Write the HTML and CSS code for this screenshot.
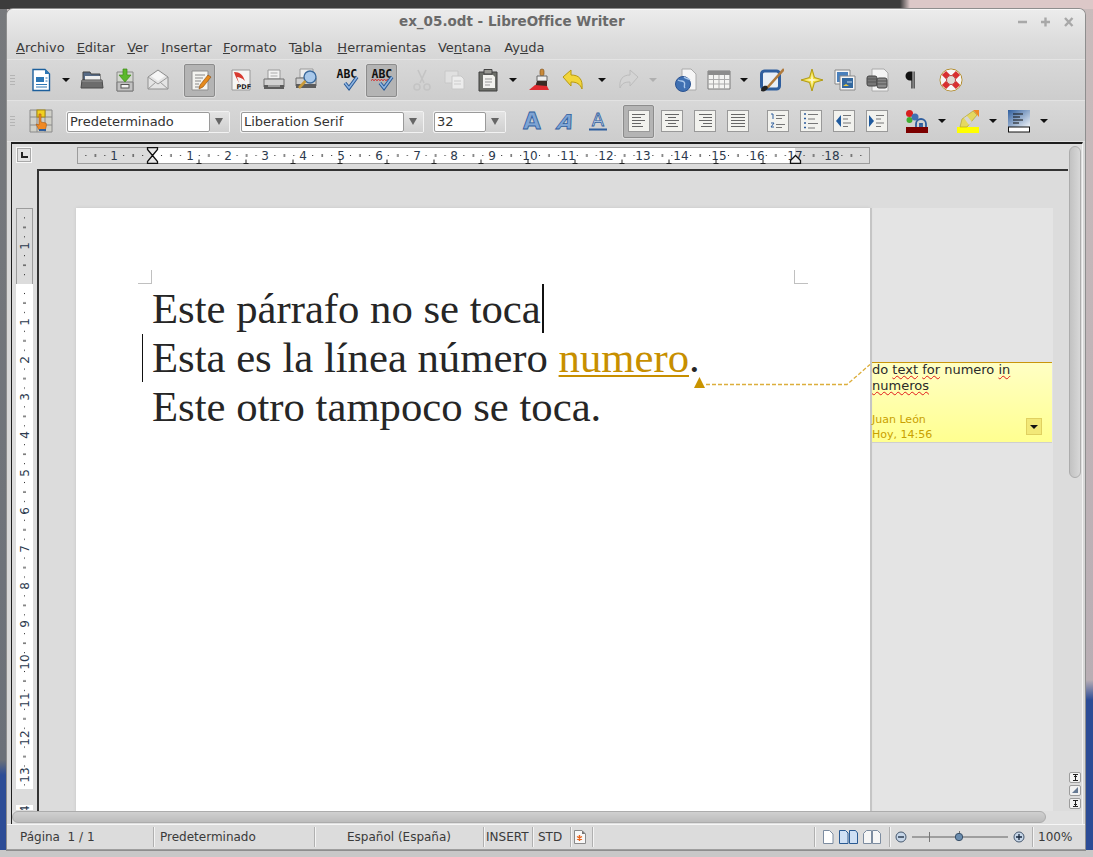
FILE: index.html
```html
<!DOCTYPE html>
<html lang="es">
<head>
    <meta charset="UTF-8">
    <title>ex_05.odt - LibreOffice Writer</title>
    <link rel="stylesheet" href="styles.css">
</head>
<body>
<div class="desktop">
<div class="window">

    <div class="titlebar">
        <span class="title">ex_05.odt - LibreOffice Writer</span>
        <div class="wm-buttons">
            <svg width="70" height="14" viewBox="0 0 70 14"><g stroke="#a8a8a8" stroke-width="2.4" fill="none"><path d="M3 7h9"/><path d="M26 7h9M30.500 2.500v9"/><path d="M50 3l7.500 8M57.500 3l-7.500 8"/></g></svg>
        </div>
    </div>

    <div class="menubar">
        <span><u>A</u>rchivo</span>
        <span><u>E</u>ditar</span>
        <span><u>V</u>er</span>
        <span><u>I</u>nsertar</span>
        <span><u>F</u>ormato</span>
        <span>T<u>a</u>bla</span>
        <span><u>H</u>erramientas</span>
        <span>Ve<u>n</u>tana</span>
        <span>Ay<u>u</u>da</span>
    </div>

    <!-- standard toolbar -->
    <div class="toolbar">
        <span class="grip"></span>
        <div class="tool"><svg viewBox="0 0 24 24"><path d="M4 1.500h12l4.500 4.500v16.500H4z" fill="#fff" stroke="#1c5f9c" stroke-width="1.400"/><path d="M16 1l5 5h-5z" fill="#2d76b4"/><rect x="7" y="9" width="8" height="5" fill="#2d76b4"/><path d="M16.500 10h2M16.500 13h2M7 16.500h11M7 19h11" stroke="#2d76b4"/></svg></div>
        <div class="drop"></div>
        <div class="tool"><svg viewBox="0 0 24 24"><path d="M3 4h7l1 2h9v6H3z" fill="#566a86" stroke="#444"/><path d="M5 8h15v4H5z" fill="#eee"/><path d="M2 12h20l1 8H1z" fill="#6c6c6c" stroke="#4a4a4a"/><path d="M2 13h20" stroke="#999"/></svg></div>
        <div class="tool"><svg viewBox="0 0 24 24"><path d="M4 4h16v19H4z" fill="#d4d8d0" stroke="#8a8a8a"/><path d="M4 14h16v9H4z" fill="#c2c2c2" stroke="#777"/><rect x="8" y="16.500" width="8" height="3.500" fill="#f2f2f2" stroke="#555"/><path d="M10 1h4v6h4l-6 7-6-7h4z" fill="#5cb82c" stroke="#3c8a18" stroke-width=".7"/></svg></div>
        <div class="tool"><svg viewBox="0 0 24 24"><path d="M2 9l10-7 10 7v12H2z" fill="#e4e4e4" stroke="#8e8e8e"/><path d="M2 9l10 7 10-7M2 21l8-7M22 21l-8-7" fill="none" stroke="#9a9a9a"/><path d="M5 8l7-5 7 5-7 5z" fill="#f6f6f6"/></svg></div>
        <div class="tool on gap9"><svg viewBox="0 0 24 24"><path d="M4 3h16v19H4z" fill="#f4f4f0" stroke="#8f8f8f"/><path d="M7 7h10M7 10h8M7 13h6M7 16h4M7 19h7" stroke="#888"/><path d="M20 7l3 2-8 10-4 2 1-4z" fill="#e68a1c" stroke="#8a4a0a" stroke-width=".6"/></svg></div>
        <div class="tool gap8"><svg viewBox="0 0 24 24"><path d="M3 2h18v20H3z" fill="#f6f6f4" stroke="#9a9a9a"/><path d="M5 4c6 0 9 3 11 9-3-3-6-4-8-4l2 6C8 11 6 8 5 4z" fill="#d83a30"/><text x="7.500" y="20.500" class="pdf">PDF</text></svg></div>
        <div class="tool"><svg viewBox="0 0 24 24"><path d="M6 2h12v9H6z" fill="#f2f2f2" stroke="#9a9a9a"/><path d="M8.500 5h7M8.500 8h7" stroke="#aaa"/><path d="M2 11h20v8H2z" fill="#d2d2d2" stroke="#6e6e6e"/><path d="M2 17h20v4H2z" fill="#5c5c5c"/><path d="M6 18h12" stroke="#ddd"/></svg></div>
        <div class="tool"><svg viewBox="0 0 24 24"><path d="M5 1h13v9H5z" fill="#eee" stroke="#9a9a9a"/><path d="M1 10h20v8H1z" fill="#cfcfcf" stroke="#6e6e6e"/><path d="M1 16h20v4H1z" fill="#5c5c5c"/><circle cx="15" cy="9" r="6" fill="#a8c8ea" stroke="#3c6a9c" stroke-width="1.400"/><path d="M10.500 13L4 20" stroke="#c89a3a" stroke-width="2.600"/></svg></div>
        <div class="tool gap7"><svg viewBox="0 0 24 24"><text x="1.500" y="10" class="abc">ABC</text><path d="M10 15l4 5 8-11" fill="none" stroke="#2a5a96" stroke-width="3.600"/><path d="M10 15l4 5 8-11" fill="none" stroke="#8db4e2" stroke-width="1.600"/></svg></div>
        <div class="tool on gap2"><svg viewBox="0 0 24 24"><text x="1.500" y="10" class="abc">ABC</text><path d="M1 12.500l1.500-1 1.500 1 1.500-1 1.500 1 1.500-1 1.500 1 1.500-1 1.500 1 1.500-1 1.500 1 1.500-1 1.500 1" fill="none" stroke="#d82020"/><path d="M10 15l4 5 8-11" fill="none" stroke="#2a5a96" stroke-width="3.600"/><path d="M10 15l4 5 8-11" fill="none" stroke="#8db4e2" stroke-width="1.600"/></svg></div>
        <div class="tool gap7"><svg viewBox="0 0 24 24"><g fill="none" stroke="#c4c4c4" stroke-width="1.600"><path d="M8 2l6 13M16 2l-6 13"/><circle cx="7" cy="19" r="3"/><circle cx="17" cy="19" r="3"/></g></svg></div>
        <div class="tool"><svg viewBox="0 0 24 24"><g fill="#e0e0e0" stroke="#c8c8c8"><path d="M2 3h13v12H2z"/><path d="M9 8h9l3 3v10H9z" fill="#ececec"/></g><path d="M11 13h7M11 16h7" stroke="#ccc"/></svg></div>
        <div class="tool"><svg viewBox="0 0 24 24"><path d="M3 4h18v19H3z" fill="#6c6e68" stroke="#3e3e3e"/><path d="M8 1.500h8V6H8z" fill="#9a9a94" stroke="#444"/><path d="M7 7h10l2 2v11H7z" fill="#f2f2ee"/><path d="M9 11h7M9 14h7M9 17h5" stroke="#999"/></svg></div>
        <div class="drop"></div>
        <div class="tool gap2"><svg viewBox="0 0 24 24"><rect x="11" y="1" width="4" height="7" rx="2" fill="#c98a3a" stroke="#7a4c14" stroke-width=".6"/><path d="M8 8h10v5H8z" fill="#eee" stroke="#666"/><path d="M8 13h10v6H6z" fill="#3a2a24"/><path d="M0 22l6-5 12 1 2 4z" fill="#e02a30"/></svg></div>
        <div class="tool"><svg viewBox="0 0 24 24"><path d="M1 9l8-7v5c8 0 12 4 11 14-2-5-5-7-11-7v4z" fill="#f2d63c" stroke="#b89a10"/></svg></div>
        <div class="drop gap2"></div>
        <div class="tool"><svg viewBox="0 0 24 24"><path d="M22 9l-8-7v5C7 7 3 11 4 20c2-5 5-6 10-6v4z" fill="#d4d4d4" stroke="#bcbcbc"/></svg></div>
        <div class="drop off"></div>
        <div class="tool gap7"><svg viewBox="0 0 24 24"><path d="M8 1h9l5 5v16H8z" fill="#f6f6f6" stroke="#aaa"/><circle cx="9" cy="16" r="7.500" fill="#3f70b2" stroke="#2a5290"/><path d="M4 12c3 2 4 0 6 2s-1 4 1 6M10 9c2 2 4 1 6 3" fill="none" stroke="#a8c6ea" stroke-width="1.400"/></svg></div>
        <div class="tool"><svg viewBox="0 0 24 24"><path d="M1 3h22v18H1z" fill="#f4f4f2" stroke="#7a7a7a"/><path d="M1 3h22v4H1z" fill="#8c8c8c"/><path d="M1 11.500h22M1 16h22M6.500 7v14M12 7v14M17.500 7v14" stroke="#aaa"/></svg></div>
        <div class="drop"></div>
        <div class="tool gap2"><svg viewBox="0 0 24 24"><rect x="1.500" y="3" width="18" height="18" rx="3" fill="#e8eef6" stroke="#2f5e9e" stroke-width="3"/><path d="M7 20L24 1" stroke="#b07a3c" stroke-width="2.600"/><path d="M1 23c0-4 3-6 6-5l1 2c-2 3-4 4-7 3z" fill="#222"/></svg></div>
        <div class="tool gap7"><svg viewBox="0 0 24 24"><path d="M12 1l2.500 8.500L23 12l-8.500 2.500L12 23l-2.500-8.500L1 12l8.500-2.500z" fill="#f0dc3c" stroke="#b09a14"/><path d="M12 5l1 6 6 1-6 1-1 6-1-6-6-1 6-1z" fill="#fdf8c8"/></svg></div>
        <div class="tool"><svg viewBox="0 0 24 24"><path d="M2 2h15v14H2z" fill="#f6f6f6" stroke="#888"/><rect x="4" y="4" width="11" height="10" fill="#4a80bc"/><path d="M7 8h15v14H7z" fill="#f6f6f6" stroke="#888"/><rect x="9" y="10" width="11" height="10" fill="#33689e"/><path d="M10 18l3-2 3 2h-6z" fill="#e8c83c"/><path d="M14 14h5" stroke="#cde"/></svg></div>
        <div class="tool"><svg viewBox="0 0 24 24"><path d="M6 1h12l4 4v18H6z" fill="#f4f4f4" stroke="#aaa"/><rect x="1" y="8" width="10" height="10" rx="2" fill="#777" stroke="#444"/><rect x="11" y="10" width="10" height="10" rx="2" fill="#8a8a8a" stroke="#444"/><path d="M1 11h10M1 14h10M11 13h10M11 16h10" stroke="#555"/></svg></div>
        <div class="tool"><svg viewBox="0 0 24 24"><path d="M13.500 3.500H11a4.500 4.500 0 0 0 0 9h1.400v8h1.100z" fill="#111"/><path d="M14.600 3.500h1v17h-1z" fill="#111"/></svg></div>
        <div class="tool gap7"><svg viewBox="0 0 24 24"><circle cx="12" cy="12" r="11" fill="#e8d8a8" stroke="#b08a2c"/><circle cx="12" cy="12" r="7.500" fill="none" stroke="#f6f6f6" stroke-width="6"/><path d="M5 5l4 4M19 5l-4 4M5 19l4-4M19 19l-4-4" stroke="#d83030" stroke-width="6"/><circle cx="12" cy="12" r="4.500" fill="#e0dcd4" stroke="#c04040"/></svg></div>
    </div>

    <!-- formatting toolbar -->
    <div class="toolbar">
        <span class="grip"></span>
        <div class="tool"><svg viewBox="0 0 24 24"><path d="M1 1h22v22H1z" fill="#d0d0c8" stroke="#8a8a8a"/><path d="M8 1v22M16 1v22M1 8h22M1 16h22" stroke="#8a8a8a"/><rect x="8" y="1" width="8" height="7" fill="#f2d020" stroke="#a88c10"/><path d="M10 5h2v8l5 1c1 2 0 5-1 7H10l-3-6 3 1z" fill="#f08a24" stroke="#a85a10" stroke-width=".6"/><rect x="10" y="20" width="7" height="2" fill="#2f5e9e"/></svg></div>
        <div class="combo style-box"><span class="combo-text">Predeterminado</span><span class="combo-arrow"></span></div>
        <div class="combo font-box"><span class="combo-text">Liberation Serif</span><span class="combo-arrow"></span></div>
        <div class="combo size-box"><span class="combo-text">32</span><span class="combo-arrow"></span></div>
        <div class="tool gap9"><svg viewBox="0 0 24 24"><text x="12" y="20" class="fa">A</text></svg></div>
        <div class="tool"><svg viewBox="0 0 24 24"><text transform="translate(10 20) skewX(-22)" class="fa fa-i">A</text></svg></div>
        <div class="tool"><svg viewBox="0 0 24 24"><text x="12" y="17" class="fa fa-u">A</text><path d="M3 20.500h18" stroke="#2f5e9e" stroke-width="2"/></svg></div>
        <div class="tool on gap8"><svg viewBox="0 0 24 24"><rect x="1.500" y="1.500" width="21" height="21" fill="#f2f2ee" stroke="#999"/><path d="M5 5.500h13M5 8.500h9M5 11.500h13M5 14.500h9M5 17.500h11" stroke="#666"/></svg></div>
        <div class="tool"><svg viewBox="0 0 24 24"><rect x="1.500" y="1.500" width="21" height="21" fill="#f2f2ee" stroke="#999"/><path d="M5 5.500h14M8 8.500h8M5 11.500h14M8 14.500h8M6 17.500h12" stroke="#666"/></svg></div>
        <div class="tool"><svg viewBox="0 0 24 24"><rect x="1.500" y="1.500" width="21" height="21" fill="#f2f2ee" stroke="#999"/><path d="M6 5.500h13M10 8.500h9M6 11.500h13M10 14.500h9M8 17.500h11" stroke="#666"/></svg></div>
        <div class="tool"><svg viewBox="0 0 24 24"><rect x="1.500" y="1.500" width="21" height="21" fill="#f2f2ee" stroke="#999"/><path d="M5 5.500h14M5 8.500h14M5 11.500h14M5 14.500h14M5 17.500h14" stroke="#666"/></svg></div>
        <div class="tool gap7"><svg viewBox="0 0 24 24"><rect x="1.500" y="1.500" width="21" height="21" fill="#f2f2ee" stroke="#999"/><path d="M5 5h2v5M5 14h3l-3 4h3" fill="none" stroke="#2f5e9e"/><path d="M10 6.500h9M10 9.500h6M10 15.500h9M10 18.500h6" stroke="#777"/></svg></div>
        <div class="tool"><svg viewBox="0 0 24 24"><rect x="1.500" y="1.500" width="21" height="21" fill="#f2f2ee" stroke="#999"/><path d="M5 5h2M5 9.500h2M5 14h2M5 18.500h2" stroke="#2f5e9e" stroke-width="1.500"/><path d="M9 5.500h10M9 10h7M9 14.500h10M9 19h7" stroke="#777"/></svg></div>
        <div class="tool"><svg viewBox="0 0 24 24"><rect x="1.500" y="1.500" width="21" height="21" fill="#f2f2ee" stroke="#999"/><path d="M9 6v12L4 12z" fill="#1f5a9e"/><path d="M11 6.500h8M11 10h5M11 14h8M11 17.500h5" stroke="#777"/></svg></div>
        <div class="tool"><svg viewBox="0 0 24 24"><rect x="1.500" y="1.500" width="21" height="21" fill="#f2f2ee" stroke="#999"/><path d="M4 6v12l5-6z" fill="#1f5a9e"/><path d="M11 6.500h8M11 10h5M11 14h8M11 17.500h5" stroke="#777"/></svg></div>
        <div class="tool gap7"><svg viewBox="0 0 24 24"><rect x="1" y="18" width="22" height="6" fill="#7c0000"/><circle cx="4.500" cy="4.500" r="3.500" fill="#d82020"/><circle cx="4.500" cy="11" r="3" fill="#40b030"/><circle cx="10" cy="8" r="3.500" fill="#3f70b2"/><path d="M11 18v-3a5 5 0 0 1 10 0v3M15 18v-3h2v3" fill="none" stroke="#2f5e9e" stroke-width="1.800"/></svg></div>
        <div class="drop"></div>
        <div class="tool"><svg viewBox="0 0 24 24"><rect x="1" y="18" width="22" height="6" fill="#ffff00"/><path d="M4 18l2-8L17 2l4 4-10 12z" fill="#e4d860" stroke="#b0a020" stroke-width=".6"/><path d="M8 9l3-2 5 6-3 3z" fill="#d6d6d6"/><path d="M17 1h6v7z" fill="#f08a24"/></svg></div>
        <div class="drop"></div>
        <div class="tool"><svg viewBox="0 0 24 24"><defs><linearGradient id="bgfill" x1="0" y1="0" x2="1" y2="1"><stop offset="0" stop-color="#2f5e9e"/><stop offset="1" stop-color="#f0f4f8"/></linearGradient></defs><rect x="1" y="1" width="22" height="17" fill="url(#bgfill)"/><path d="M6 5h10M6 8h7M6 11h10M6 14h6" stroke="#111"/><rect x="1.500" y="18" width="21" height="5" fill="#fff" stroke="#111"/></svg></div>
        <div class="drop"></div>
    </div>

    <div class="editor">
        <div class="edit-left">
            <div class="ruler-row">
                <div class="ruler-corner"><span class="tab-mark"></span></div>
                <svg class="h-ruler" width="793" height="17" viewBox="0 0 793 17">
                    <defs>
                        <pattern id="hticks" x="75" y="0" width="37.800" height="17" patternUnits="userSpaceOnUse">
                            <rect x="9" y="8" width="1" height="1" fill="#222"/>
                            <rect x="18.500" y="7" width="1" height="3" fill="#222"/>
                            <rect x="28" y="8" width="1" height="1" fill="#222"/>
                        </pattern>
                    </defs>
                    <rect x=".5" y=".5" width="792" height="16" fill="#dcdcdc" stroke="#9c9c9c"/>
                    <rect x="75" y="1" width="643" height="15" fill="#fff"/>
                    <rect x="0" y="1" width="793" height="15" fill="url(#hticks)"/>
                    <g class="rnum">
                        <text x="37">1</text><text x="113">1</text><text x="151">2</text><text x="188">3</text><text x="226">4</text><text x="264">5</text><text x="302">6</text><text x="340">7</text><text x="377">8</text><text x="415">9</text><text x="453">10</text><text x="491">11</text><text x="529">12</text><text x="566">13</text><text x="604">14</text><text x="642">15</text><text x="680">16</text><text x="718">17</text><text x="755">18</text>
                    </g>
                    <g stroke="#222" fill="none"><path d="M122 12.500v4M119.500 16.500h5M169 12.500v4M166.500 16.500h5M216 12.500v4M213.500 16.500h5M263 12.500v4M260.500 16.500h5M310 12.500v4M307.500 16.500h5M357 12.500v4M354.500 16.500h5M404 12.500v4M401.500 16.500h5M451 12.500v4M448.500 16.500h5M498 12.500v4M495.500 16.500h5M545 12.500v4M542.500 16.500h5M592 12.500v4M589.500 16.500h5M639 12.500v4M636.500 16.500h5M686 12.500v4M683.500 16.500h5"/></g>
                    <path d="M70.500 .5h10v2l-5 6 5 6v2h-10v-2l5-6-5-6z" fill="#e8e8e8" stroke="#111" stroke-width="1.300"/>
                    <path d="M713.500 16.500v-3l5-5 5 5v3z" fill="#f0f0f0" stroke="#111" stroke-width="1.300"/>
                </svg>
            </div>
            <div class="work">
                <div class="v-col">
                    <svg class="v-ruler" width="17" height="602" viewBox="0 0 17 602">
                        <defs>
                            <pattern id="vticks" x="0" y="76" width="17" height="37.800" patternUnits="userSpaceOnUse">
                                <rect x="8" y="9" width="1" height="1" fill="#222"/>
                                <rect x="7" y="18.500" width="3" height="1" fill="#222"/>
                                <rect x="8" y="28" width="1" height="1" fill="#222"/>
                            </pattern>
                        </defs>
                        <rect x=".5" y=".5" width="16" height="76" fill="#dcdcdc" stroke="#9c9c9c"/>
                        <rect x="0" y="76" width="17" height="505" fill="#fff"/>
                        <rect x="0" y="597" width="17" height="5" fill="#fff"/>
                        <rect x="0" y="1" width="17" height="580" fill="url(#vticks)"/>
                        <g class="rnum">
                            <text transform="translate(13 38) rotate(-90)">1</text><text transform="translate(13 114) rotate(-90)">1</text><text transform="translate(13 152) rotate(-90)">2</text><text transform="translate(13 189) rotate(-90)">3</text><text transform="translate(13 227) rotate(-90)">4</text><text transform="translate(13 265) rotate(-90)">5</text><text transform="translate(13 303) rotate(-90)">6</text><text transform="translate(13 341) rotate(-90)">7</text><text transform="translate(13 378) rotate(-90)">8</text><text transform="translate(13 416) rotate(-90)">9</text><text transform="translate(13 454) rotate(-90)">10</text><text transform="translate(13 492) rotate(-90)">11</text><text transform="translate(13 530) rotate(-90)">12</text><text transform="translate(13 567) rotate(-90)">13</text><text transform="translate(13 605) rotate(-90)">14</text>
                        </g>
                    </svg>
                </div>
                <div class="view">
                    <div class="page">
                        <span class="crop crop-l"></span>
                        <span class="crop crop-r"></span>
                        <span class="change-bar"></span>
                        <p class="doc-line">Este párrafo no se toca<span class="caret"></span></p>
                        <p class="doc-line">Esta es la línea número <span class="noted">numero</span>.</p>
                        <p class="doc-line">Este otro tampoco se toca.</p>
                        <svg class="anchor" width="182" height="30" viewBox="0 0 182 30">
                            <path d="M4 28l5.500-11 5.500 11z" fill="#c99400"/>
                            <path d="M16 24.500h141l23-20" fill="none" stroke="#dcae3c" stroke-width="1.300" stroke-dasharray="4 2"/>
                        </svg>
                    </div>
                    <div class="notes">
                        <div class="note">
                            <p class="note-text">do <span class="typo">text</span> <span class="typo">for</span> numero <span class="typo">in</span> <span class="typo">numeros</span></p>
                            <div class="note-foot">
                                <p class="note-meta">Juan León<br>Hoy, 14:56</p>
                                <span class="note-btn"></span>
                            </div>
                        </div>
                    </div>
                </div>
            </div>
        </div>
        <div class="vscroll">
            <div class="thumb-v"></div>
            <div class="page-nav">
                <span class="nav-btn"><svg width="9" height="9" viewBox="0 0 9 9"><path d="M2 1.500h5M4.500 2v5M3 4l1.500-1.500L6 4M2 7.500h5" fill="none" stroke="#222"/></svg></span>
                <span class="nav-btn"><svg width="9" height="9" viewBox="0 0 9 9"><path d="M1 7l6-6v6z" fill="#667a94"/></svg></span>
                <span class="nav-btn"><svg width="9" height="9" viewBox="0 0 9 9"><path d="M2 1.500h5M4.500 2v5M3 5l1.500 1.500L6 5M2 7.500h5" fill="none" stroke="#222"/></svg></span>
            </div>
        </div>
        <div class="hscroll"><div class="thumb-h"></div></div>
    </div>

    <div class="statusbar">
        <div class="cell cell-page">Página&nbsp; 1 / 1</div>
        <div class="cell cell-style">Predeterminado</div>
        <div class="cell cell-lang">Español (España)</div>
        <div class="cell cell-mode">INSERT</div>
        <div class="cell cell-std">STD</div>
        <div class="cell cell-sig"><svg width="12" height="14" viewBox="0 0 12 14"><path d="M.5 .5h7.500l3.500 3.500v9.500H.5z" fill="#f8f8f8" stroke="#8a8a8a"/><path d="M8 .5l3.500 3.500H8z" fill="#777"/><path d="M5.500 5v6M3 6.500l5 3M8 6.500l-5 3" stroke="#e8641c" stroke-width="1.400"/></svg></div>
        <div class="cell cell-blank"></div>
        <div class="cell cell-views">
            <svg width="12" height="16" viewBox="0 0 12 16"><path d="M1.500 1.500h6l3.500 3.500v9.500H1.500z" fill="#fff" stroke="#7c8ca0"/></svg>
            <svg width="19" height="16" viewBox="0 0 19 16"><path d="M.5 1.500h6l2.500 2.500v10.500H.5zM10.500 1.500h6l2 2.500v10.500h-8z" fill="#cfe0f4" stroke="#2a5a92"/></svg>
            <svg width="18" height="16" viewBox="0 0 18 16"><path d="M.5 4.500l3-3h5v13h-8zM9.500 1.500h5l3 3v10h-8z" fill="#f6f6f6" stroke="#7c8ca0"/></svg>
        </div>
        <div class="cell cell-zoom">
            <svg width="12" height="12" viewBox="0 0 12 12"><circle cx="6" cy="6" r="5" fill="#c6d6e8" stroke="#46586e"/><path d="M3 6h6" stroke="#16263c" stroke-width="1.300"/></svg>
            <svg class="slider" width="98" height="14" viewBox="0 0 98 14"><path d="M1 7h96" stroke="#8a8a8a" stroke-width="1.400"/><path d="M18.500 2v10M48.500 1v3" stroke="#777"/><circle cx="48" cy="7" r="3.700" fill="#6a8cae" stroke="#3a5068"/></svg>
            <svg width="12" height="12" viewBox="0 0 12 12"><circle cx="6" cy="6" r="5" fill="#c6d6e8" stroke="#46586e"/><path d="M3 6h6M6 3v6" stroke="#16263c" stroke-width="1.300"/></svg>
        </div>
        <div class="cell cell-pct">100%</div>
    </div>

</div>
</div>
</body>
</html>
```

FILE: styles.css
```css
* {
    box-sizing: border-box;
}

body {
    margin: 0;
    font-family: "DejaVu Sans", sans-serif;
    font-size: 13px;
    color: #333;
}

p {
    margin: 0;
}

.desktop {
    width: 1093px;
    height: 857px;
    overflow: hidden;
    padding: 9px 8px 7px 7px;
    background:
        linear-gradient(to bottom, transparent 850px, #c8c8c8 850px),
        linear-gradient(to right, #3c3c3c 0, #3c3c3c 900px, #dcc8c8 910px) top left / 100% 9px no-repeat,
        linear-gradient(to bottom, #77797c 0, #6b7078 760px, #2c4c96 775px) top left / 7px 100% no-repeat,
        linear-gradient(to bottom, #c9bcbc 0, #b9aeb4 680px, #2c4c96 700px, #2c4c96 100%);
}

.window {
    height: 841px;
    display: flex;
    flex-direction: column;
    border-radius: 6px 6px 0 0;
    background: #d8d8d8;
    box-shadow: 0 0 0 1px #8e8e8e;
    overflow: hidden;
}

/* title + menu */

.titlebar {
    height: 28px;
    flex: none;
    display: flex;
    align-items: center;
    padding: 0 0 6px 392px;
    position: relative;
    background: linear-gradient(#ececec, #dedede);
    border-top: 1px solid #f8f8f8;
}

.title {
    font-weight: bold;
    font-size: 13.500px;
    color: #6a6a6a;
}

.wm-buttons {
    position: absolute;
    right: 0;
    top: 5px;
    height: 14px;
}

.menubar {
    height: 23px;
    flex: none;
    display: flex;
    gap: 12px;
    padding: 0 0 0 9px;
    align-items: center;
    line-height: 16px;
    color: #3a3a3a;
    background: linear-gradient(#dedede, #d6d6d6);
    border-bottom: 1px solid #e4e4e4;
}

.menubar span:nth-child(3) { margin-right: 1px; }
.menubar span:nth-child(4) { margin-right: -1px; }
.menubar span:nth-child(6) { margin-right: 3px; }
.menubar span:nth-child(8) { margin-right: 1px; }

/* toolbars */

.toolbar {
    height: 41px;
    flex: none;
    display: flex;
    align-items: center;
    padding-left: 3px;
    background: linear-gradient(#d8d8d8, #cdcdcd);
    border-bottom: 1px solid #e2e2e2;
}

.grip {
    width: 5px;
    height: 11px;
    margin-right: 9px;
    background: repeating-linear-gradient(to bottom, #b4b4b4 0, #b4b4b4 1px, transparent 1px, transparent 3px);
}

.tool {
    width: 31px;
    height: 33px;
    margin: 0 1px;
    flex: none;
    display: flex;
    align-items: center;
    justify-content: center;
    border: 1px solid transparent;
    border-radius: 2px;
}

.tool svg {
    width: 24px;
    height: 24px;
}

.tool.on {
    background: #b4b4b4;
    border-color: #8c8c8c;
    box-shadow: 0 0 0 1px #dcdcdc;
}

.drop {
    width: 18px;
    height: 33px;
    flex: none;
    position: relative;
}

.drop::after {
    content: "";
    position: absolute;
    left: 5px;
    top: 14px;
    border-top: 4px solid #111;
    border-left: 4px solid transparent;
    border-right: 4px solid transparent;
}

.drop.off::after {
    border-top-color: #b0b0b0;
}

.gap2 { margin-left: 3px; }
.gap7 { margin-left: 8px; }
.gap8 { margin-left: 9px; }
.gap9 { margin-left: 10px; }

.combo {
    height: 22px;
    flex: none;
    display: flex;
    margin-top: 2px;
    background: #e6e6e6;
    border: 1px solid #f2f2f2;
    border-radius: 2px;
}

.style-box { width: 164px; margin-left: 9px; }
.font-box { width: 184px; margin-left: 10px; }
.size-box { width: 73px; margin-left: 9px; }

.combo-text {
    flex: 1;
    padding-left: 2px;
    line-height: 18px;
    background: #fff;
    border: 1px solid #9a9a9a;
    border-radius: 2px;
    color: #333;
}

.combo-arrow {
    width: 19px;
    position: relative;
    background: linear-gradient(#e4e4e4, #cfcfcf);
}

.combo-arrow::after {
    content: "";
    position: absolute;
    left: 5px;
    top: 6px;
    border-top: 7px solid #666;
    border-left: 4px solid transparent;
    border-right: 4px solid transparent;
}

.pdf {
    font: bold 6.500px "DejaVu Sans", sans-serif;
    fill: #222;
}

.abc {
    font: bold 11.500px "DejaVu Sans Mono", monospace;
    fill: #111;
}

.fa {
    font: bold 23px "DejaVu Sans", sans-serif;
    text-anchor: middle;
    fill: #7ea4d4;
    stroke: #2f5e9e;
    stroke-width: .8px;
}

.fa-i {
    font-size: 20px;
}

.fa-u {
    font-size: 18px;
    font-weight: normal;
    fill: #cfdcec;
}

/* editor */

.editor {
    height: 682px;
    flex: none;
    margin: 0 2px 0 4px;
    display: grid;
    grid-template-columns: 1fr 14px;
    grid-template-rows: 667px 13px;
    background: #dcdcdc;
    border-top: 2px solid #1e1e1e;
    border-left: 1px solid #1e1e1e;
    border-right: 1px solid #f4f4f4;
    min-width: 0;
}

.edit-left {
    min-width: 0;
    display: flex;
    flex-direction: column;
}

.ruler-row {
    height: 25px;
    flex: none;
    display: flex;
    align-items: flex-start;
    padding: 3px 0 0 4px;
}

.ruler-corner {
    width: 16px;
    height: 16px;
    flex: none;
    background: #e2e2e2;
    border: 1px solid #f8f8f8;
    box-shadow: inset 0 0 0 1px #a8a8a8;
    position: relative;
}

.tab-mark {
    position: absolute;
    left: 4px;
    top: 4px;
    width: 7px;
    height: 6px;
    border-left: 2px solid #222;
    border-bottom: 2px solid #222;
}

.h-ruler {
    margin-left: 45px;
    flex: none;
}

.rnum text {
    font: 12px "DejaVu Sans", sans-serif;
    fill: #2c3a4e;
    text-anchor: middle;
}

.h-ruler .rnum text {
    transform: translateY(13px);
}

.work {
    height: 642px;
    display: flex;
    overflow: hidden;
}

.v-col {
    width: 25px;
    flex: none;
    padding: 39px 0 0 4px;
}

.view {
    flex: 1;
    min-width: 0;
    display: flex;
    align-items: flex-start;
    padding: 37px 0 0 37px;
    border-top: 2px solid #333;
    border-left: 2px solid #333;
    overflow: hidden;
}

.page {
    width: 794px;
    height: 640px;
    flex: none;
    padding: 76px 0 0 76px;
    background: #fff;
    position: relative;
    box-shadow: 0 0 3px #c4c4c4;
    font-family: "Liberation Serif", serif;
    font-size: 42.700px;
    line-height: 49px;
    color: #262626;
    white-space: nowrap;
}

.doc-line {
    height: 49px;
}

.caret {
    display: inline-block;
    width: 2px;
    height: 49px;
    margin-left: 1px;
    background: #111;
    vertical-align: top;
}

.noted {
    color: #c78f00;
    text-decoration: underline;
    text-decoration-thickness: 2px;
    text-underline-offset: 3px;
}

.crop {
    position: absolute;
    top: 62px;
    width: 14px;
    height: 14px;
    border-bottom: 1px solid #c0c0c0;
}

.crop-l {
    left: 62px;
    border-right: 1px solid #c0c0c0;
}

.crop-r {
    left: 718px;
    border-left: 1px solid #c0c0c0;
}

.change-bar {
    position: absolute;
    left: 66px;
    top: 126px;
    width: 1px;
    height: 48px;
    background: #111;
}

.anchor {
    position: absolute;
    left: 614px;
    top: 152px;
    z-index: 1;
}

/* comment margin */

.notes {
    width: 183px;
    height: 640px;
    flex: none;
    padding: 154px 1px 0 0;
    background: #e4e4e4;
    border-left: 2px solid #c6c6c6;
}

.note {
    height: 81px;
    background: linear-gradient(#ffffc4, #ffff90);
    border-top: 1px solid #c9950a;
    border-bottom: 1px solid #cfcfcf;
    display: flex;
    flex-direction: column;
    justify-content: space-between;
}

.note-text {
    line-height: 16px;
    color: #2a2a2a;
    margin-top: -1px;
}

.typo {
    text-decoration: underline wavy #e01818 1px;
    text-underline-offset: 1px;
}

.note-foot {
    display: flex;
    justify-content: space-between;
    align-items: flex-end;
    padding-right: 10px;
}

.note-meta {
    font-size: 11px;
    line-height: 15px;
    color: #c9a000;
}

.note-btn {
    width: 16px;
    height: 17px;
    margin-bottom: 7px;
    background: #f2e878;
    border: 1px solid #e0d060;
    position: relative;
}

.note-btn::after {
    content: "";
    position: absolute;
    left: 3px;
    top: 6px;
    border-top: 4px solid #111;
    border-left: 4px solid transparent;
    border-right: 4px solid transparent;
}

/* scrollbars */

.vscroll {
    display: flex;
    flex-direction: column;
    justify-content: space-between;
    padding: 2px 0 2px 1px;
    background: #dcdcdc;
}

.thumb-v {
    width: 12px;
    height: 332px;
    border: 1px solid #acacac;
    border-radius: 6px;
    background: linear-gradient(to right, #c2c2c2, #d8d8d8);
}

.page-nav {
    display: flex;
    flex-direction: column;
    gap: 2px;
}

.nav-btn {
    width: 12px;
    height: 11px;
    display: flex;
    align-items: center;
    justify-content: center;
    background: #f2f2f2;
    border: 1px solid #9c9c9c;
    border-radius: 2px;
}

.hscroll {
    grid-column: 1 / 3;
    background: #e0e0e0;
}

.thumb-h {
    width: 1034px;
    height: 12px;
    border: 1px solid #acacac;
    border-radius: 6px;
    background: linear-gradient(#d0d0d0, #bcbcbc);
}

/* status bar */

.statusbar {
    height: 26px;
    flex: 1;
    display: flex;
    align-items: center;
    font-size: 12px;
    background: #dcdcdc;
    border-top: 1px solid #f6f6f6;
    border-bottom: 1px solid #9e9e9e;
    color: #3a3a3a;
}

.cell {
    height: 20px;
    flex: none;
    line-height: 20px;
    border-right: 1px solid #b0b0b0;
    box-shadow: 1px 0 0 #f4f4f4;
    white-space: nowrap;
}

.cell-page { width: 147px; padding-left: 13px; }
.cell-style { width: 161px; padding-left: 6px; }
.cell-lang { width: 169px; text-align: center; }
.cell-mode { width: 49px; padding-left: 2px; }
.cell-std { width: 38px; padding-left: 5px; }

.cell-sig {
    width: 22px;
    display: flex;
    align-items: center;
    justify-content: center;
    padding-right: 4px;
}

.cell-blank { width: 222px; }

.cell-views {
    width: 75px;
    display: flex;
    align-items: center;
    gap: 5px;
    padding-left: 7px;
}

.cell-zoom {
    width: 143px;
    display: flex;
    align-items: center;
    gap: 4px;
    padding-left: 5px;
}

.cell-pct {
    border: 0;
    box-shadow: none;
    padding-left: 5px;
}
```
